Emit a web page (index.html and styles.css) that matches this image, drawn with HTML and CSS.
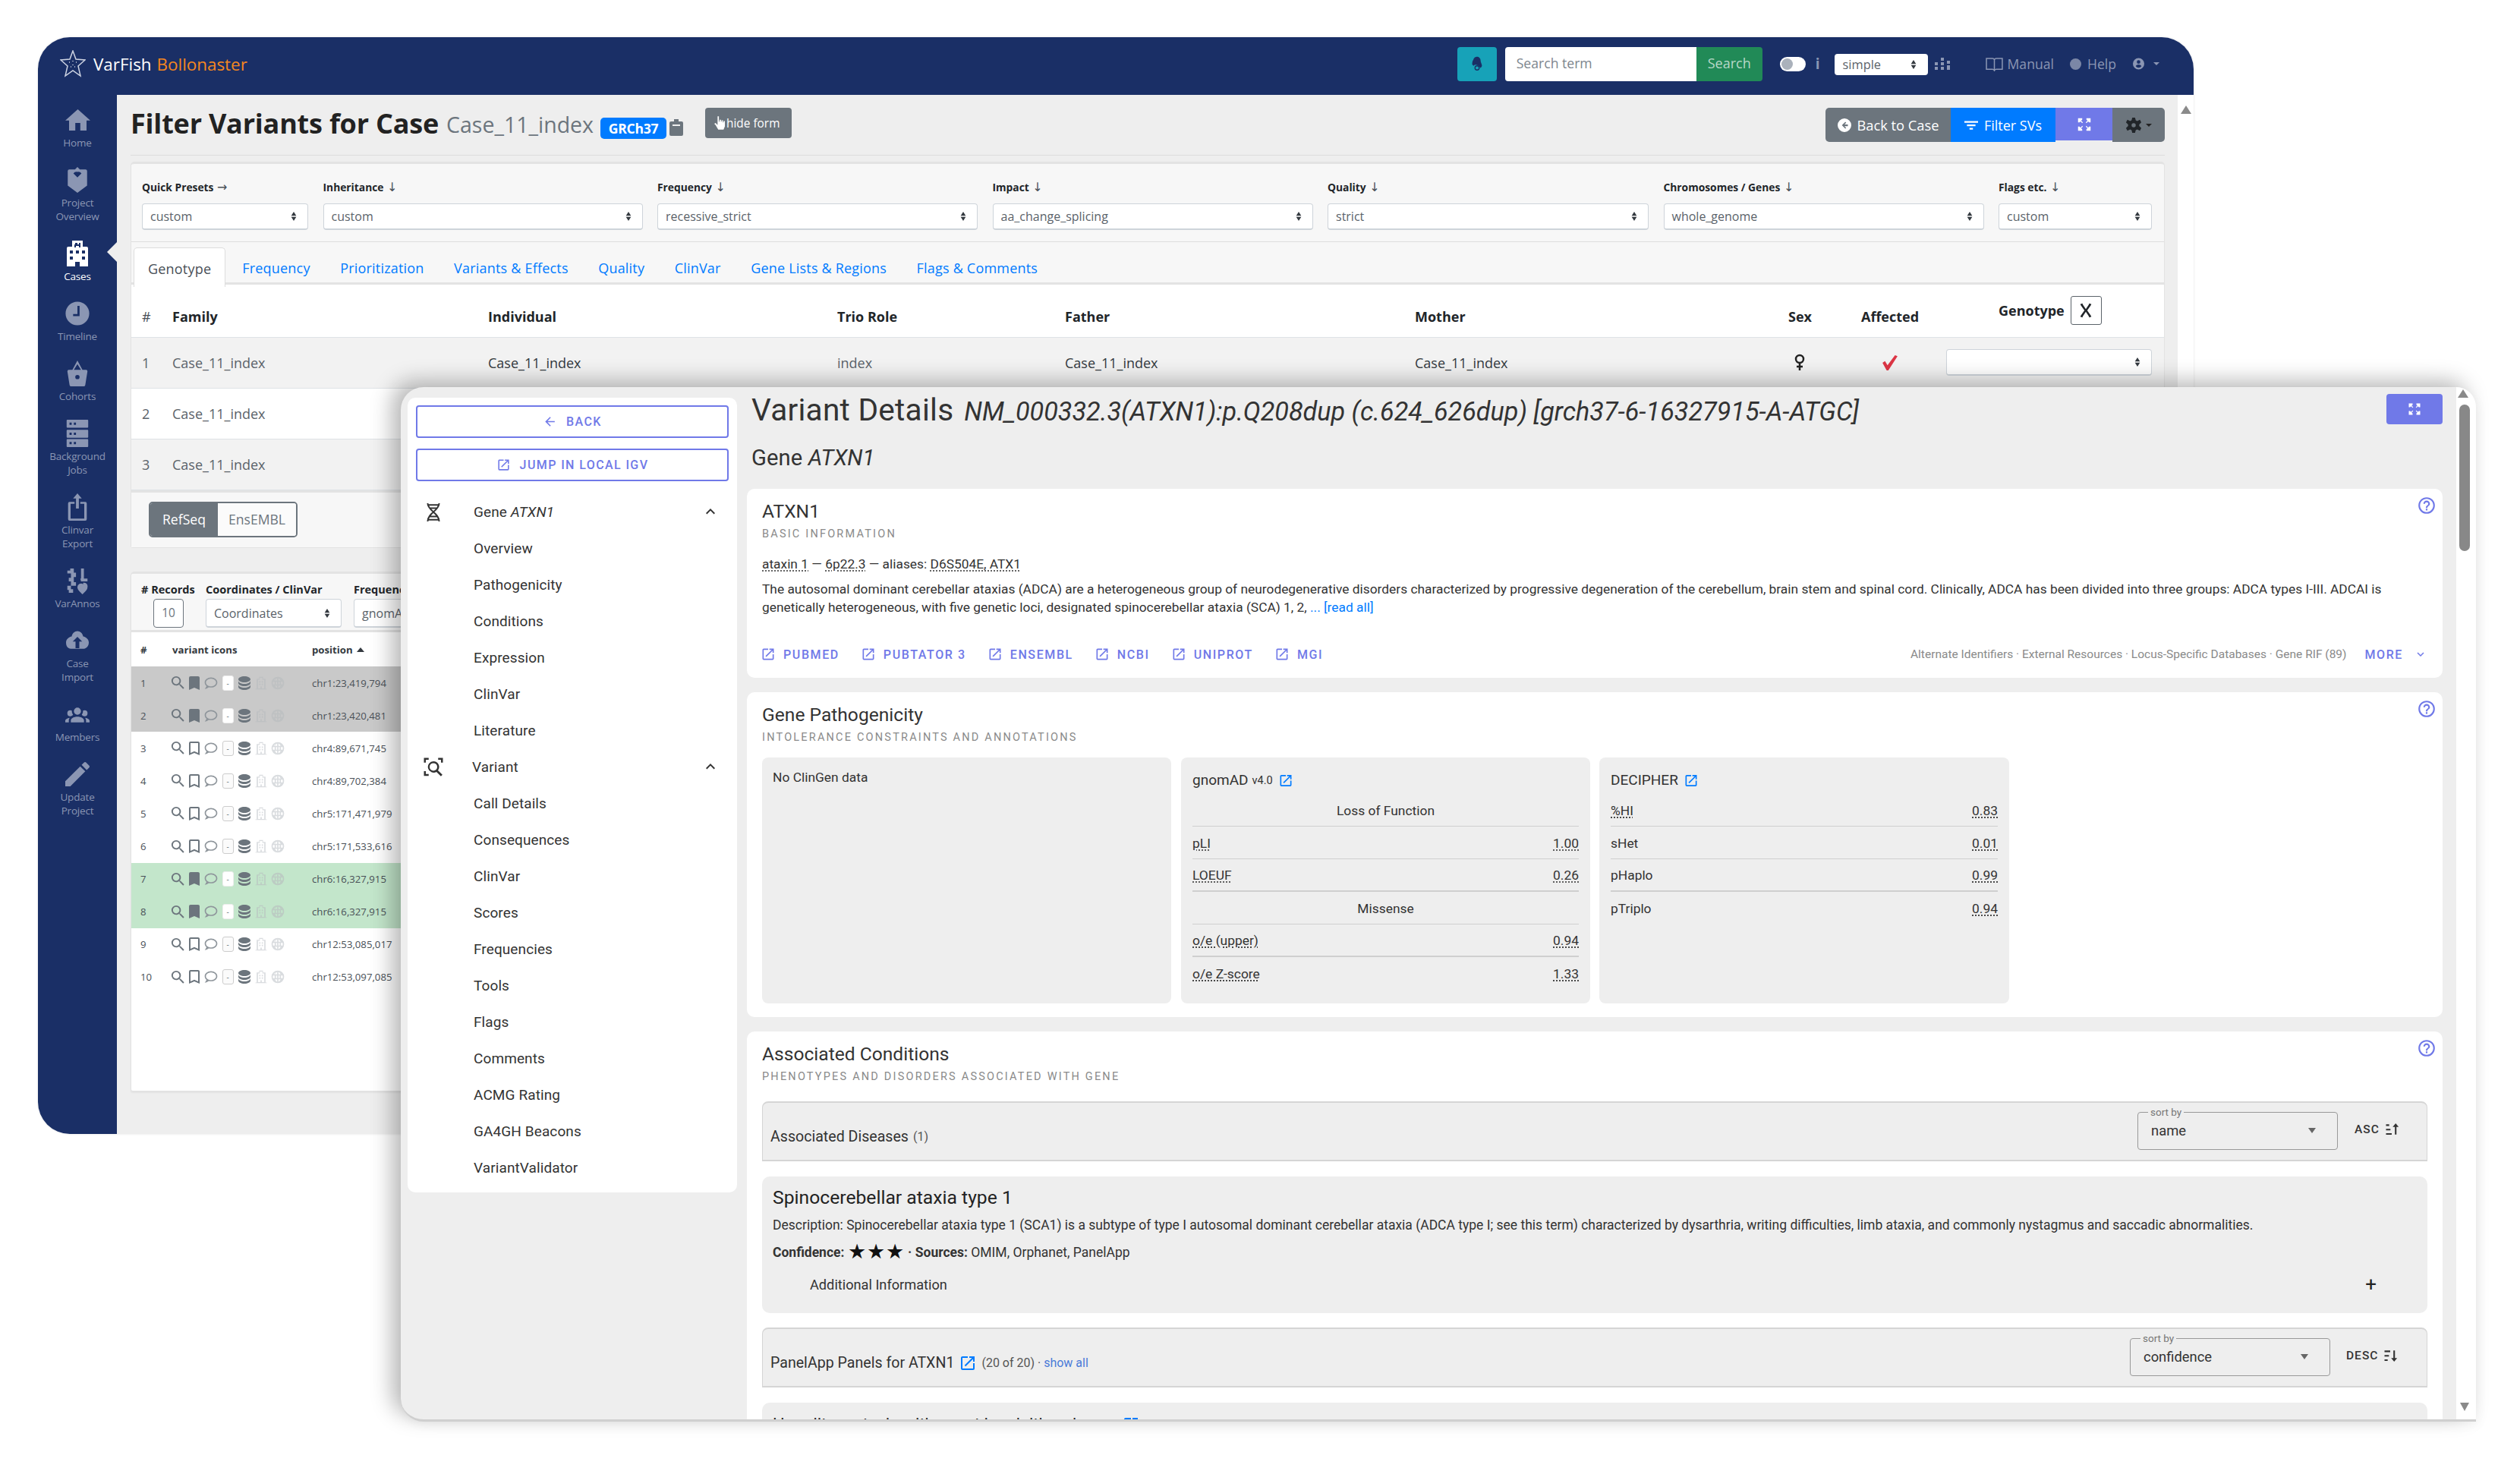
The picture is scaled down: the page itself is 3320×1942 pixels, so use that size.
FILE: index.html
```html
<!DOCTYPE html>
<html lang="en">
<head>
<meta charset="utf-8">
<title>VarFish Bollonaster</title>
<link rel="stylesheet" href="styles.css">
</head>
<body>
<svg class="defs" aria-hidden="true">
  <defs>
    <symbol id="i-ext" viewBox="0 0 24 24"><path d="M14,3V5H17.59L7.76,14.83L9.17,16.24L19,6.41V10H21V3M19,19H5V5H12V3H5C3.89,3 3,3.9 3,5V19A2,2 0 0,0 5,21H19A2,2 0 0,0 21,19V12H19V19Z"/></symbol>
    <symbol id="i-up" viewBox="0 0 24 24"><path d="M7.41,15.41L12,10.83L16.59,15.41L18,14L12,8L6,14L7.41,15.41Z"/></symbol>
    <symbol id="i-down" viewBox="0 0 24 24"><path d="M7.41,8.58L12,13.17L16.59,8.58L18,10L12,16L6,10L7.41,8.58Z"/></symbol>
    <symbol id="i-left" viewBox="0 0 24 24"><path d="M20,11V13H8L13.5,18.5L12.08,19.92L4.16,12L12.08,4.08L13.5,5.5L8,11H20Z"/></symbol>
    <symbol id="i-help" viewBox="0 0 24 24"><path d="M11,18H13V16H11V18M12,2A10,10 0 0,0 2,12A10,10 0 0,0 12,22A10,10 0 0,0 22,12A10,10 0 0,0 12,2M12,20C7.59,20 4,16.41 4,12C4,7.59 7.59,4 12,4C16.41,4 20,7.59 20,12C20,16.41 16.41,20 12,20M12,6A4,4 0 0,0 8,10H10A2,2 0 0,1 12,8A2,2 0 0,1 14,10C14,12 11,11.75 11,15H13C13,12.75 16,12.5 16,10A4,4 0 0,0 12,6Z"/></symbol>
    <symbol id="i-mag" viewBox="0 0 24 24"><path d="M9.5,3A6.5,6.5 0 0,1 16,9.5C16,11.11 15.41,12.59 14.44,13.73L14.71,14H15.5L20.5,19L19,20.5L14,15.5V14.71L13.73,14.44C12.59,15.41 11.11,16 9.5,16A6.5,6.5 0 0,1 3,9.5A6.5,6.5 0 0,1 9.5,3M9.5,5C7,5 5,7 5,9.5C5,12 7,14 9.5,14C12,14 14,12 14,9.5C14,7 12,5 9.5,5Z"/></symbol>
    <symbol id="i-bm" viewBox="0 0 24 24"><path d="M17,3H7A2,2 0 0,0 5,5V21L12,18L19,21V5C19,3.89 18.1,3 17,3Z"/></symbol>
    <symbol id="i-bmo" viewBox="0 0 24 24"><path d="M17,18L12,15.82L7,18V5H17M17,3H7A2,2 0 0,0 5,5V21L12,18L19,21V5C19,3.89 18.1,3 17,3Z"/></symbol>
    <symbol id="i-cmt" viewBox="0 0 24 24"><path d="M12,3C6.5,3 2,6.58 2,11C2.05,13.15 3.06,15.17 4.75,16.5C4.75,17.1 4.33,18.67 2,21C4.37,20.89 6.64,20 8.47,18.5C9.61,18.83 10.81,19 12,19C17.5,19 22,15.42 22,11C22,6.58 17.5,3 12,3M12,17C7.58,17 4,14.31 4,11C4,7.69 7.58,5 12,5C16.42,5 20,7.69 20,11C20,14.31 16.42,17 12,17Z"/></symbol>
    <symbol id="i-db" viewBox="0 0 24 24"><path d="M12,3C7.58,3 4,4.79 4,7C4,9.21 7.58,11 12,11C16.42,11 20,9.21 20,7C20,4.79 16.42,3 12,3M4,9V12C4,14.21 7.58,16 12,16C16.42,16 20,14.21 20,12V9C20,11.21 16.42,13 12,13C7.58,13 4,11.21 4,9M4,14V17C4,19.21 7.58,21 12,21C16.42,21 20,19.21 20,17V14C20,16.21 16.42,18 12,18C7.58,18 4,16.21 4,14Z"/></symbol>
    <symbol id="i-bld" viewBox="0 0 24 24"><path d="M9 2h6v3h4v17H5V5h4V2zm1 1.500v3H7v14h4v-3h2v3h4v-14h-3v-3h-4zM9 9h2v2H9V9zm4 0h2v2h-2V9zM9 13h2v2H9v-2zm4 0h2v2h-2v-2zM3 21h18v1H3v-1z"/></symbol>
    <symbol id="i-globe" viewBox="0 0 24 24"><path d="M12 2a10 10 0 1 0 0 20 10 10 0 0 0 0-20zm-1 2.100V8H7.600C8.300 6 9.500 4.600 11 4.100zm2 0c1.500.5 2.700 1.900 3.400 3.900H13V4.100zM5.600 8H5.500c1-1.500 2.300-2.700 3.900-3.300C8 5.900 6.900 7 6.500 8h-.9zM4.300 10H7.100c-.1.700-.1 1.300-.1 2s0 1.300.1 2H4.300a8 8 0 0 1 0-4zm4.800 0H11v4H9.100c-.1-.7-.1-1.300-.1-2s0-1.300.1-2zm3.900 0h1.900c.1.700.1 1.300.1 2s0 1.300-.1 2H13v-4zm3.900 0h2.800a8 8 0 0 1 0 4h-2.800c.1-.7.1-1.300.1-2s0-1.300-.1-2zM7.600 16H11v3.900C9.500 19.400 8.300 18 7.600 16zm5.400 0h3.400c-.7 2-1.900 3.400-3.400 3.900V16z"/></symbol>
    <symbol id="i-home" viewBox="2 3 20 17"><path d="M10,20V14H14V20H19V12H22L12,3L2,12H5V20H10Z"/></symbol>
    <symbol id="i-cube" viewBox="0 0 24 32"><path d="M12 0l3 3h7a2 2 0 0 1 2 2v18l-12 9L0 23V5a2 2 0 0 1 2-2h7l3-3zm0 6a5 5 0 0 0-5 2l5 5 5-5a5 5 0 0 0-5-2z"/></symbol>
    <symbol id="i-hosp" viewBox="0 0 32 34"><path d="M9 0h14v8h5a2 2 0 0 1 2 2v24H19v-6h-6v6H2V10a2 2 0 0 1 2-2h5V0zm4 3v2h-1v4h2V7h4v2h2V3h-2v2h-2V3h-3zM6 13v4h4v-4H6zm8 0v4h4v-4h-4zm8 0v4h4v-4h-4zM6 21v4h4v-4H6zm16 0v4h4v-4h-4z" fill-rule="evenodd"/></symbol>
    <symbol id="i-clock" viewBox="0 0 24 24"><path fill-rule="evenodd" d="M12 1a11 11 0 1 1 0 22 11 11 0 0 1 0-22zM12 5v7.500H8v2h6V5h-2z"/></symbol>
    <symbol id="i-bag" viewBox="0 0 28 36"><path fill-rule="evenodd" d="M14 0l7 13h5a2 2 0 0 1 2 2l-3 19a2 2 0 0 1-2 2H5a2 2 0 0 1-2-2L0 15a2 2 0 0 1 2-2h5L14 0zm0 5L9 13h10L14 5zm0 15a3 3 0 1 0 0 6 3 3 0 0 0 0-6z"/></symbol>
    <symbol id="i-srv" viewBox="0 0 30 38"><path fill-rule="evenodd" d="M1 0h28a1 1 0 0 1 1 1v9a1 1 0 0 1-1 1H1a1 1 0 0 1-1-1V1a1 1 0 0 1 1-1zm3 4v3h3V4H4zm6 0v3h3V4h-3zM1 14h28a1 1 0 0 1 1 1v9a1 1 0 0 1-1 1H1a1 1 0 0 1-1-1v-9a1 1 0 0 1 1-1zm3 4v3h3v-3H4zm6 0v3h3v-3h-3zM1 27h28a1 1 0 0 1 1 1v9a1 1 0 0 1-1 1H1a1 1 0 0 1-1-1v-9a1 1 0 0 1 1-1zm3 4v3h3v-3H4zm6 0v3h3v-3h-3z"/></symbol>
    <symbol id="i-exp" viewBox="0 0 28 38"><path fill-rule="evenodd" d="M14 0l6 7h-4v14h-4V7H8l6-7zM3 12h7v2.500H4.500v20.500h19V14.500H18V12h7a2 2 0 0 1 2 2v22a2 2 0 0 1-2 2H3a2 2 0 0 1-2-2V14a2 2 0 0 1 2-2z"/></symbol>
    <symbol id="i-ann" viewBox="0 0 32 38"><path d="M6 2h5v6h3V14h-3v7h3v5H7v-6H4v-5h3V9H2V5h4V2zm14 0h5v14h5v4h-9l-1-4h1V2zm4 20a5 5 0 0 1 6 6c0 4-4 7-7 10-3-3-7-6-7-10a5 5 0 0 1 8-4zM2 26h5v5h3v5H4v-4H2v-6z"/></symbol>
    <symbol id="i-cloud" viewBox="0 0 24 24"><path fill-rule="evenodd" d="M14,13V20H10V13H7L12,8L17,13M12,2C15,2 17.500,4.500 18,7.500C21,8 24,10.500 24,14C24,18 21,20.500 19,20.500H5C2,20.500 0,18 0,14C0,10.500 3,8 6,7.500C6.500,4.500 9,2 12,2Z"/></symbol>
    <symbol id="i-grp" viewBox="0 0 24 24"><path d="M12,5.500A3.500,3.500 0 0,1 15.500,9A3.500,3.500 0 0,1 12,12.500A3.500,3.500 0 0,1 8.500,9A3.500,3.500 0 0,1 12,5.500M5,8C5.560,8 6.080,8.150 6.530,8.420C6.380,9.850 6.800,11.270 7.660,12.380C7.160,13.340 6.160,14 5,14A3,3 0 0,1 2,11A3,3 0 0,1 5,8M19,8A3,3 0 0,1 22,11A3,3 0 0,1 19,14C17.840,14 16.840,13.340 16.340,12.380C17.200,11.270 17.620,9.850 17.470,8.420C17.920,8.150 18.440,8 19,8M5.500,18.250C5.500,16.180 8.410,14.500 12,14.500C15.590,14.500 18.500,16.180 18.500,18.250V20H5.500V18.250M0,20V18.500C0,17.110 1.890,15.940 4.450,15.600C3.860,16.280 3.500,17.220 3.500,18.250V20H0M24,20H20.500V18.250C20.500,17.220 20.140,16.280 19.550,15.600C22.110,15.940 24,17.110 24,18.500V20Z"/></symbol>
    <symbol id="i-pen" viewBox="3 3 18 18"><path d="M20.710,7.040C21.100,6.650 21.100,6 20.710,5.630L18.370,3.290C18,2.900 17.350,2.900 16.960,3.290L15.120,5.120L18.870,8.870M3,17.250V21H6.750L17.810,9.930L14.060,6.180L3,17.250Z"/></symbol>
    <symbol id="i-dna" viewBox="0 0 24 24"><path fill="none" stroke="currentColor" stroke-width="1.800" d="M5 1c0 9 14 12 14 22M19 1c0 9-14 12-14 22M5 3h14M7 7h10M7 17h10M5 21h14"/></symbol>
    <symbol id="i-target" viewBox="0 0 24 24"><path d="M2 2h5v2H4v3H2V2zm15 0h5v5h-2V4h-3V2zM2 16h2v3h3v2H2v-5z"/><path d="M12 5.500a6 6 0 0 1 4.800 9.600l4.700 4.700-1.600 1.600-4.700-4.700A6 6 0 1 1 12 5.500zm0 2a4 4 0 1 0 0 8 4 4 0 0 0 0-8z" fill-rule="evenodd"/></symbol>
    <symbol id="i-expand" viewBox="0 0 24 24"><path d="M3 3h6v2l-1.500 1.500L10 9l-1 1-2.500-2.500L5 9H3V3zm18 0v6h-2l-1.500-1.500L15 10l-1-1 2.500-2.500L15 5V3h6zM3 21v-6h2l1.500 1.500L9 14l1 1-2.500 2.500L9 19v2H3zm18 0h-6v-2l1.500-1.500L14 15l1-1 2.500 2.500L19 15h2v6z"/></symbol>
    <symbol id="i-sort" viewBox="0 0 24 24"><path d="M3 4h9v2.500H3V4zm0 7h7v2.500H3V11zm0 7h5v2.500H3V18zM17 4h2.500v12H23l-4.750 5.500L13.500 16H17V4z"/></symbol>
    <symbol id="i-sortu" viewBox="0 0 24 24"><path d="M3 4h5v2.500H3V4zm0 7h7v2.500H3V11zm0 7h9v2.500H3V18zM17 20h2.500V8H23l-4.750-5.500L13.500 8H17v12z"/></symbol>
    <symbol id="i-caret" viewBox="0 0 12 24"><path d="M6 3l5 8H1l5-8zm0 18l-5-8h10l-5 8z"/></symbol>
  </defs>
</svg>

<section class="win-back">
  <header class="topbar">
    <div class="brand">
      <svg class="logo" viewBox="0 0 34 36"><path fill="none" stroke="#cdd3e2" stroke-width="1.500" d="M17 1l4 11 12 1-9 8 3 13-10-7-10 7 3-13-9-8 12-1zM12 16h1M21 16h1M17 14v1M14 22h1M19 22h1M17 19v1"/></svg>
      <span class="brand-name">VarFish</span>
      <span class="brand-sub">Bollonaster</span>
    </div>
    <div class="top-tools">
      <button class="teal-btn" type="button"><svg class="ic-18" viewBox="0 0 24 24"><path fill="#1a2f66" d="M12 2a5 5 0 0 1 5 5c0 3 2 5 2 8a6 6 0 0 1-2 3l-3-3a6 6 0 0 0-2-1 4 4 0 0 0-5 1l-2-2c0-6 2-6 2-8a5 5 0 0 1 5-3z"/><circle cx="12" cy="18" r="3" fill="none" stroke="#1a2f66" stroke-width="1.500"/></svg></button>
      <div class="search"><span class="search-input">Search term</span><span class="search-btn">Search</span></div>
      <span class="toggle"><span class="knob"></span></span>
      <span class="info-i">i</span>
      <span class="mini-select">simple<svg class="sel-caret" viewBox="0 0 12 24"><use href="#i-caret"/></svg></span>
      <svg class="ic-bars" viewBox="0 0 20 16"><path d="M8 0h4v4H8zM0 6h4v4H0zM8 6h4v4H8zM16 4h4v4h-4zM0 12h4v4H0zM8 12h4v4H8zM16 10h4v6h-4z"/></svg>
      <span class="top-link man"><svg class="ic-book" viewBox="0 0 24 20"><path fill="none" stroke="currentColor" stroke-width="1.600" d="M1 2h8a3 3 0 0 1 3 2 3 3 0 0 1 3-2h8v15h-8a3 3 0 0 0-3 2 3 3 0 0 0-3-2H1zM12 4v15"/></svg>Manual</span>
      <span class="top-link hlp"><span class="dot-help"></span>Help</span>
      <svg class="ic-user" viewBox="0 0 16 16"><path fill-rule="evenodd" d="M8 0a8 8 0 1 1 0 16A8 8 0 0 1 8 0zm0 3a2.500 2.500 0 1 0 0 5 2.500 2.500 0 0 0 0-5zm0 6c-2 0-4 1-4 2.500a5 5 0 0 0 8 0C12 10 10 9 8 9z"/></svg>
      <span class="tiny-caret"></span>
    </div>
  </header>

  <div class="back-body">
    <nav class="side">
      <a class="side-item"><span class="side-ic"><svg class="s-home"><use href="#i-home"/></svg></span><span>Home</span></a>
      <a class="side-item"><span class="side-ic"><svg class="s-cube"><use href="#i-cube"/></svg></span><span>Project<br>Overview</span></a>
      <a class="side-item is-active"><span class="side-ic"><svg class="s-hosp"><use href="#i-hosp"/></svg></span><span>Cases</span><i class="side-arrow"></i></a>
      <a class="side-item"><span class="side-ic"><svg class="s-clock"><use href="#i-clock"/></svg></span><span>Timeline</span></a>
      <a class="side-item"><span class="side-ic"><svg class="s-bag"><use href="#i-bag"/></svg></span><span>Cohorts</span></a>
      <a class="side-item"><span class="side-ic"><svg class="s-srv"><use href="#i-srv"/></svg></span><span>Background<br>Jobs</span></a>
      <a class="side-item"><span class="side-ic"><svg class="s-exp"><use href="#i-exp"/></svg></span><span>Clinvar<br>Export</span></a>
      <a class="side-item"><span class="side-ic"><svg class="s-ann"><use href="#i-ann"/></svg></span><span>VarAnnos</span></a>
      <a class="side-item"><span class="side-ic"><svg class="s-cloud"><use href="#i-cloud"/></svg></span><span>Case<br>Import</span></a>
      <a class="side-item"><span class="side-ic"><svg class="s-grp"><use href="#i-grp"/></svg></span><span>Members</span></a>
      <a class="side-item"><span class="side-ic"><svg class="s-pen"><use href="#i-pen"/></svg></span><span>Update<br>Project</span></a>
    </nav>

    <main class="back-main">
      <div class="title-row">
        <h1 class="page-title">Filter Variants for Case</h1>
        <span class="title-case">Case_11_index</span>
        <span class="badge-genome">GRCh37</span>
        <svg class="ic-clip" viewBox="0 0 18 22"><path d="M6 0h6v3h4a2 2 0 0 1 2 2v15a2 2 0 0 1-2 2H2a2 2 0 0 1-2-2V5a2 2 0 0 1 2-2h4V0zM4 7v2h10V7H4z" fill-rule="evenodd"/></svg>
        <button class="hide-form" type="button"><svg class="ic-hand" viewBox="0 0 16 20"><path fill="#fff" d="M5 0h2v8h1V5h2v3h1V6h2v3h1V7h2v8l-2 5H6l-4-7-2-2 2-1 3 3V0z"/></svg>hide form</button>
        <div class="btn-group">
          <span class="gb gb-grey"><svg class="ic-back" viewBox="0 0 16 16"><path fill-rule="evenodd" d="M8 0a8 8 0 1 1 0 16A8 8 0 0 1 8 0zm1 4L5 8l4 4 1-1-2-2h4V7H8l2-2-1-1z"/></svg>Back to Case</span>
          <span class="gb gb-blue"><svg class="ic-filter" viewBox="0 0 16 16"><path d="M0 3h16v2H0zM3 7h10v2H3zM6 11h4v2H6z"/></svg>Filter SVs</span>
          <span class="gb gb-purple"><svg class="ic-expand"><use href="#i-expand"/></svg></span>
          <span class="gb gb-gear"><svg class="ic-gear" viewBox="0 0 24 24"><path fill-rule="evenodd" d="M10 1h4l1 4 2 1 4-2 2 4-3 3v2l3 3-2 4-4-2-2 1-1 4h-4l-1-4-2-1-4 2-2-4 3-3v-2L1 8l2-4 4 2 2-1 1-4zm2 8a3 3 0 1 0 0 6 3 3 0 0 0 0-6z"/></svg><i class="tiny-caret dark"></i></span>
        </div>
      </div>

      <section class="q-card">
        <div class="presets">
          <div class="preset"><label class="lbl">Quick Presets <span class="arr">→</span></label><span class="sel">custom<svg class="sel-caret" viewBox="0 0 12 24"><use href="#i-caret"/></svg></span></div>
          <div class="preset"><label class="lbl">Inheritance <span class="arr">↓</span></label><span class="sel">custom<svg class="sel-caret" viewBox="0 0 12 24"><use href="#i-caret"/></svg></span></div>
          <div class="preset"><label class="lbl">Frequency <span class="arr">↓</span></label><span class="sel">recessive_strict<svg class="sel-caret" viewBox="0 0 12 24"><use href="#i-caret"/></svg></span></div>
          <div class="preset"><label class="lbl">Impact <span class="arr">↓</span></label><span class="sel">aa_change_splicing<svg class="sel-caret" viewBox="0 0 12 24"><use href="#i-caret"/></svg></span></div>
          <div class="preset"><label class="lbl">Quality <span class="arr">↓</span></label><span class="sel">strict<svg class="sel-caret" viewBox="0 0 12 24"><use href="#i-caret"/></svg></span></div>
          <div class="preset"><label class="lbl">Chromosomes / Genes <span class="arr">↓</span></label><span class="sel">whole_genome<svg class="sel-caret" viewBox="0 0 12 24"><use href="#i-caret"/></svg></span></div>
          <div class="preset"><label class="lbl">Flags etc. <span class="arr">↓</span></label><span class="sel">custom<svg class="sel-caret" viewBox="0 0 12 24"><use href="#i-caret"/></svg></span></div>
        </div>
        <div class="tabs">
          <a class="tab is-on">Genotype</a><a class="tab">Frequency</a><a class="tab">Prioritization</a><a class="tab">Variants &amp; Effects</a><a class="tab">Quality</a><a class="tab">ClinVar</a><a class="tab">Gene Lists &amp; Regions</a><a class="tab">Flags &amp; Comments</a>
        </div>
        <div class="ped">
          <div class="ped-head">
            <span class="muted-h">#</span><b>Family</b><b>Individual</b><b>Trio Role</b><b>Father</b><b>Mother</b><b>Sex</b><b>Affected</b>
            <span class="geno-h"><b>Genotype</b><span class="x-btn"><svg viewBox="0 0 24 24"><path d="M4 3l3-1 1 2 4 6 4-6 1-2 3 1-1 2-5 7 5 7 1 2-3 1-1-2-4-6-4 6-1 2-3-1 1-2 5-7-5-7z"/></svg></span></span>
          </div>
          <div class="ped-row grey">
            <span>1</span><span>Case_11_index</span><span class="dark">Case_11_index</span><span>index</span><span class="dark">Case_11_index</span><span class="dark">Case_11_index</span>
            <span><svg class="ic-fem" viewBox="0 0 14 24"><path fill="none" stroke="#222" stroke-width="2.500" d="M7 2a5 5 0 1 1 0 10A5 5 0 0 1 7 2zM7 12v10M3 17h8"/></svg></span>
            <span><svg class="ic-chk" viewBox="0 0 20 20"><path fill="#dc3545" d="M1 10l3-2 3 5L16 1l3 1L8 19h-2z"/></svg></span>
            <span class="sel geno-sel"><svg class="sel-caret" viewBox="0 0 12 24"><use href="#i-caret"/></svg></span>
          </div>
          <div class="ped-row"><span>2</span><span>Case_11_index</span></div>
          <div class="ped-row grey"><span>3</span><span>Case_11_index</span></div>
        </div>
        <div class="ref-foot">
          <div class="refgroup"><span class="ref-on">RefSeq</span><span class="ref-off">EnsEMBL</span></div>
        </div>
      </section>

      <section class="res-card">
        <div class="res-tools">
          <div class="rt-col rt-first"><label class="lbl">#&nbsp;Records</label><span class="num">10</span></div>
          <div class="rt-col rt-wide"><label class="lbl">Coordinates / ClinVar</label><span class="sel small">Coordinates<svg class="sel-caret" viewBox="0 0 12 24"><use href="#i-caret"/></svg></span></div>
          <div class="rt-col rt-wide"><label class="lbl">Frequency</label><span class="sel small">gnomAD</span></div>
        </div>
        <div class="res-head"><b>#</b><b>variant icons</b><b>position <span class="arrow-up"></span></b></div>
        <div class="res-row gr"><span>1</span><span class="vi"><svg class="vs"><use href="#i-mag"/></svg><svg class="vb"><use href="#i-bm"/></svg><svg class="vc"><use href="#i-cmt"/></svg><i class="vm wh">-</i><svg class="vd"><use href="#i-db"/></svg><svg class="vf"><use href="#i-bld"/></svg><svg class="vf"><use href="#i-globe"/></svg></span><span>chr1:23,419,794</span></div>
        <div class="res-row gr"><span>2</span><span class="vi"><svg class="vs"><use href="#i-mag"/></svg><svg class="vb"><use href="#i-bm"/></svg><svg class="vc"><use href="#i-cmt"/></svg><i class="vm wh">-</i><svg class="vd"><use href="#i-db"/></svg><svg class="vf"><use href="#i-bld"/></svg><svg class="vf"><use href="#i-globe"/></svg></span><span>chr1:23,420,481</span></div>
        <div class="res-row"><span>3</span><span class="vi"><svg class="vs"><use href="#i-mag"/></svg><svg class="vb"><use href="#i-bmo"/></svg><svg class="vc"><use href="#i-cmt"/></svg><i class="vm">-</i><svg class="vd"><use href="#i-db"/></svg><svg class="vf"><use href="#i-bld"/></svg><svg class="vf"><use href="#i-globe"/></svg></span><span>chr4:89,671,745</span></div>
        <div class="res-row"><span>4</span><span class="vi"><svg class="vs"><use href="#i-mag"/></svg><svg class="vb"><use href="#i-bmo"/></svg><svg class="vc"><use href="#i-cmt"/></svg><i class="vm">-</i><svg class="vd"><use href="#i-db"/></svg><svg class="vf"><use href="#i-bld"/></svg><svg class="vf"><use href="#i-globe"/></svg></span><span>chr4:89,702,384</span></div>
        <div class="res-row"><span>5</span><span class="vi"><svg class="vs"><use href="#i-mag"/></svg><svg class="vb"><use href="#i-bmo"/></svg><svg class="vc"><use href="#i-cmt"/></svg><i class="vm">-</i><svg class="vd"><use href="#i-db"/></svg><svg class="vf"><use href="#i-bld"/></svg><svg class="vf"><use href="#i-globe"/></svg></span><span>chr5:171,471,979</span></div>
        <div class="res-row"><span>6</span><span class="vi"><svg class="vs"><use href="#i-mag"/></svg><svg class="vb"><use href="#i-bmo"/></svg><svg class="vc"><use href="#i-cmt"/></svg><i class="vm">-</i><svg class="vd"><use href="#i-db"/></svg><svg class="vf"><use href="#i-bld"/></svg><svg class="vf"><use href="#i-globe"/></svg></span><span>chr5:171,533,616</span></div>
        <div class="res-row gn"><span>7</span><span class="vi"><svg class="vs"><use href="#i-mag"/></svg><svg class="vb"><use href="#i-bm"/></svg><svg class="vc"><use href="#i-cmt"/></svg><i class="vm wh">-</i><svg class="vd"><use href="#i-db"/></svg><svg class="vf"><use href="#i-bld"/></svg><svg class="vf"><use href="#i-globe"/></svg></span><span>chr6:16,327,915</span></div>
        <div class="res-row gn"><span>8</span><span class="vi"><svg class="vs"><use href="#i-mag"/></svg><svg class="vb"><use href="#i-bm"/></svg><svg class="vc"><use href="#i-cmt"/></svg><i class="vm wh">-</i><svg class="vd"><use href="#i-db"/></svg><svg class="vf"><use href="#i-bld"/></svg><svg class="vf"><use href="#i-globe"/></svg></span><span>chr6:16,327,915</span></div>
        <div class="res-row"><span>9</span><span class="vi"><svg class="vs"><use href="#i-mag"/></svg><svg class="vb"><use href="#i-bmo"/></svg><svg class="vc"><use href="#i-cmt"/></svg><i class="vm">-</i><svg class="vd"><use href="#i-db"/></svg><svg class="vf"><use href="#i-bld"/></svg><svg class="vf"><use href="#i-globe"/></svg></span><span>chr12:53,085,017</span></div>
        <div class="res-row"><span>10</span><span class="vi"><svg class="vs"><use href="#i-mag"/></svg><svg class="vb"><use href="#i-bmo"/></svg><svg class="vc"><use href="#i-cmt"/></svg><i class="vm">-</i><svg class="vd"><use href="#i-db"/></svg><svg class="vf"><use href="#i-bld"/></svg><svg class="vf"><use href="#i-globe"/></svg></span><span>chr12:53,097,085</span></div>
      </section>
    </main>

    <div class="back-scroll"><span class="sc-up"></span></div>
  </div>
</section>

<section class="win-front">
  <aside class="fnav">
    <button class="btn-out" type="button"><svg class="bi"><use href="#i-left"/></svg>Back</button>
    <button class="btn-out" type="button"><svg class="bi"><use href="#i-ext"/></svg>Jump in Local IGV</button>
    <div class="fn-list">
      <div class="fn-item fn-head"><svg class="fn-ic"><use href="#i-dna"/></svg><span>Gene <em>ATXN1</em></span><svg class="fn-chev"><use href="#i-up"/></svg></div>
      <div class="fn-item">Overview</div>
      <div class="fn-item">Pathogenicity</div>
      <div class="fn-item">Conditions</div>
      <div class="fn-item">Expression</div>
      <div class="fn-item">ClinVar</div>
      <div class="fn-item">Literature</div>
      <div class="fn-item fn-head"><svg class="fn-ic fn-ic-t"><use href="#i-target"/></svg><span>Variant</span><svg class="fn-chev"><use href="#i-up"/></svg></div>
      <div class="fn-item">Call Details</div>
      <div class="fn-item">Consequences</div>
      <div class="fn-item">ClinVar</div>
      <div class="fn-item">Scores</div>
      <div class="fn-item">Frequencies</div>
      <div class="fn-item">Tools</div>
      <div class="fn-item">Flags</div>
      <div class="fn-item">Comments</div>
      <div class="fn-item">ACMG Rating</div>
      <div class="fn-item">GA4GH Beacons</div>
      <div class="fn-item">VariantValidator</div>
    </div>
  </aside>

  <div class="fmain">
    <div class="vd-head">
      <div class="vd-title"><h2>Variant Details</h2><em>NM_000332.3(ATXN1):p.Q208dup (c.624_626dup) [grch37-6-16327915-A-ATGC]</em></div>
      <span class="vd-btn"><svg><use href="#i-expand"/></svg></span>
    </div>
    <div class="vd-gene">Gene <em>ATXN1</em></div>

    <section class="fcard fc1">
      <svg class="hq"><use href="#i-help"/></svg>
      <div class="fc-title">ATXN1</div>
      <div class="fc-sub">Basic Information</div>
      <div class="gene-line"><u>ataxin 1</u> — <u>6p22.3</u> — aliases: <u>D6S504E, ATX1</u></div>
      <p class="gene-desc">The autosomal dominant cerebellar ataxias (ADCA) are a heterogeneous group of neurodegenerative disorders characterized by progressive degeneration of the cerebellum, brain stem and spinal cord. Clinically, ADCA has been divided into three groups: ADCA types I-III. ADCAI is<br>genetically heterogeneous, with five genetic loci, designated spinocerebellar ataxia (SCA) 1, 2, <a>... [read all]</a></p>
      <div class="ext-row">
        <a class="xl"><svg><use href="#i-ext"/></svg>PubMed</a>
        <a class="xl"><svg><use href="#i-ext"/></svg>PubTator 3</a>
        <a class="xl"><svg><use href="#i-ext"/></svg>Ensembl</a>
        <a class="xl"><svg><use href="#i-ext"/></svg>NCBI</a>
        <a class="xl"><svg><use href="#i-ext"/></svg>UniProt</a>
        <a class="xl"><svg><use href="#i-ext"/></svg>MGI</a>
        <span class="more-info">Alternate Identifiers · External Resources · Locus-Specific Databases · Gene RIF (89)</span>
        <a class="more">More<svg><use href="#i-down"/></svg></a>
      </div>
    </section>

    <section class="fcard fc2">
      <svg class="hq"><use href="#i-help"/></svg>
      <div class="fc-title">Gene Pathogenicity</div>
      <div class="fc-sub">Intolerance Constraints and Annotations</div>
      <div class="panels">
        <div class="pan"><span class="pan-plain">No ClinGen data</span></div>
        <div class="pan">
          <div class="pan-title">gnomAD <small>v4.0</small> <svg class="pan-ext"><use href="#i-ext"/></svg></div>
          <div class="pr center line">Loss of Function</div>
          <div class="pr line"><u>pLI</u><u>1.00</u></div>
          <div class="pr line thick"><u>LOEUF</u><u>0.26</u></div>
          <div class="pr center line">Missense</div>
          <div class="pr line thick"><u>o/e (upper)</u><u>0.94</u></div>
          <div class="pr"><u>o/e Z-score</u><u>1.33</u></div>
        </div>
        <div class="pan">
          <div class="pan-title">DECIPHER <svg class="pan-ext"><use href="#i-ext"/></svg></div>
          <div class="pr line"><u>%HI</u><u>0.83</u></div>
          <div class="pr line"><span>sHet</span><u>0.01</u></div>
          <div class="pr line thick"><span>pHaplo</span><u>0.99</u></div>
          <div class="pr"><span>pTriplo</span><u>0.94</u></div>
        </div>
      </div>
    </section>

    <section class="fcard fc3">
      <svg class="hq"><use href="#i-help"/></svg>
      <div class="fc-title">Associated Conditions</div>
      <div class="fc-sub">Phenotypes and Disorders Associated with Gene</div>
      <div class="bar-box bb1">
        <span class="bar-label">Associated Diseases <small>(1)</small></span>
        <fieldset class="sort-by"><legend>sort by</legend><span>name</span><i class="tri"></i></fieldset>
        <span class="sort-dir">ASC<svg><use href="#i-sortu"/></svg></span>
      </div>
      <div class="dis-box">
        <div class="dis-title">Spinocerebellar ataxia type 1</div>
        <div class="dis-line">Description: Spinocerebellar ataxia type 1 (SCA1) is a subtype of type I autosomal dominant cerebellar ataxia (ADCA type I; see this term) characterized by dysarthria, writing difficulties, limb ataxia, and commonly nystagmus and saccadic abnormalities.</div>
        <div class="dis-line conf"><b>Confidence:</b> <span class="stars">★★★</span> <b>· Sources:</b> OMIM, Orphanet, PanelApp</div>
        <div class="dis-more"><span>Additional Information</span><span class="plus">+</span></div>
      </div>
      <div class="bar-box bb2">
        <span class="bar-label">PanelApp Panels for ATXN1 <svg class="bar-ext"><use href="#i-ext"/></svg> <small>(20 of 20) · <a>show all</a></small></span>
        <fieldset class="sort-by"><legend>sort by</legend><span>confidence</span><i class="tri"></i></fieldset>
        <span class="sort-dir">DESC<svg><use href="#i-sort"/></svg></span>
      </div>
      <div class="dis-box dis-last"><div class="dis-sub">Hereditary ataxia with onset in adulthood <small>(v 1.95)</small> <svg class="bar-ext"><use href="#i-ext"/></svg></div></div>
    </section>
  </div>

  <div class="f-scroll"><span class="sc-up"></span><span class="thumb"></span><span class="sc-down"></span></div>
</section>
</body>
</html>
```

FILE: styles.css
```css
* { box-sizing: border-box; }
html, body { margin: 0; padding: 0; }
body { width: 3320px; height: 1942px; background: #fff; font-family: "Open Sans", "Liberation Sans", sans-serif; color: #495057; position: relative; overflow: hidden; }
.defs { width: 0; height: 0; position: absolute; }
svg { display: block; fill: currentColor; }
h1, h2, p { margin: 0; }
button { font: inherit; border: 0; }

/* back window */
.win-back { position: absolute; left: 50px; top: 49px; width: 2840px; height: 1445px; border-radius: 42px 42px 0 42px; overflow: hidden; box-shadow: 0 0 3px rgba(0,0,0,.12); display: flex; flex-direction: column; background: #fff; }
.topbar { height: 76px; background: #1a2f66; display: flex; align-items: flex-start; flex: none; }
.brand { display: flex; align-items: center; height: 70px; padding-left: 29px; font-size: 22.400px; }
.logo { width: 34px; height: 36px; margin-right: 10px; }
.brand-name { color: #fff; margin-right: 7px; }
.brand-sub { color: #f5871f; }
.top-tools { margin-left: auto; display: flex; align-items: center; height: 64px; padding-top: 6px; padding-right: 45px; color: #8b96b3; }
.teal-btn { width: 52px; height: 45px; background: #17a2b8; border-radius: 4px; display: flex; align-items: center; justify-content: center; margin-right: 11px; }
.ic-18 { width: 22px; height: 26px; }
.search { display: flex; height: 45px; margin-right: 23px; }
.search-input { width: 252px; background: #fff; border-radius: 4px 0 0 4px; color: #7d868e; font-size: 17.600px; line-height: 42px; padding-left: 15px; }
.search-btn { width: 87px; background: #218a57; color: #b8d8c9; font-size: 18px; line-height: 42px; text-align: center; border-radius: 0 4px 4px 0; }
.toggle { width: 34px; height: 19px; background: #fff; border-radius: 10px; position: relative; margin-right: 13px; }
.knob { position: absolute; left: 2px; top: 2px; width: 15px; height: 15px; background: #aab1bb; border-radius: 50%; }
.info-i { font-size: 19px; font-weight: 700; color: #8b96b3; margin-right: 19px; }
.mini-select { width: 123px; height: 28px; margin-top: 2px; background: #fff; border-radius: 4px; color: #5b636a; font-size: 16.400px; line-height: 30px; padding-left: 11px; display: flex; justify-content: space-between; align-items: center; padding-right: 15px; margin-right: 9px; }
.sel-caret { width: 8px; height: 16px; fill: #343a40; flex: none; }
.ic-bars { width: 20px; height: 16px; margin-right: 47px; }
.top-link { display: flex; align-items: center; font-size: 17.600px; }
.ic-book { width: 23px; height: 19px; margin-right: 6px; }
.man { margin-right: 21px; }
.hlp { margin-right: 22px; }
.dot-help { width: 15px; height: 15px; background: #7b87a6; border-radius: 50%; margin-right: 8px; }
.ic-user { width: 15px; height: 16px; margin-right: 12px; }
.tiny-caret { width: 0; height: 0; border: 4px solid transparent; border-top: 4px solid #8b96b3; border-bottom: 0; }
.tiny-caret.dark { border-top-color: #222; margin-left: 5px; }

.back-body { flex: 1; display: flex; min-height: 0; }
.side { width: 104px; flex: none; background: #1a2f66; padding-top: 16px; display: flex; flex-direction: column; gap: 23px; color: #8b96b3; font-size: 13.500px; line-height: 18px; text-align: center; }
.side-item { display: block; position: relative; letter-spacing: -.2px; }
.side-ic { height: 36px; display: flex; align-items: center; justify-content: center; margin-bottom: 2px; }
.side-ic svg { margin-top: -3px; }
.side-item.is-active { color: #fff; }
.side-arrow { position: absolute; right: 0; top: 2px; width: 0; height: 0; border: 13px solid transparent; border-right: 13px solid #eee; border-left: 0; }
.s-home { width: 33px; height: 28px; }
.s-cube { width: 30px; height: 34px; }
.s-hosp { width: 32px; height: 34px; }
.s-clock { width: 34px; height: 34px; }
.s-bag { width: 34px; height: 34px; }
.s-srv { width: 32px; height: 36px; }
.s-exp { width: 28px; height: 36px; }
.s-ann { width: 34px; height: 36px; }
.s-cloud { width: 36px; height: 30px; }
.s-grp { width: 36px; height: 32px; }
.s-pen { width: 32px; height: 32px; }

.back-main { flex: 1; background: #eee; padding: 0 17px 0 18px; min-width: 0; }
.back-scroll { width: 21px; flex: none; background: #fff; position: relative; }
.sc-up { position: absolute; left: 4px; top: 14px; width: 0; height: 0; border: 7px solid transparent; border-bottom: 11px solid #8a8a8a; border-top: 0; }

.title-row { height: 80px; border-bottom: 1px solid #dcdcdc; display: flex; align-items: flex-start; padding-top: 17px; margin-bottom: 8px; position: relative; }
.page-title { font-size: 36px; line-height: 42px; font-weight: 700; color: #222; white-space: nowrap; margin-right: 10px; letter-spacing: -.2px; }
.title-case { font-size: 28.500px; line-height: 44px; color: #6c757d; margin-right: 9px; white-space: nowrap; }
.badge-genome { margin-top: 13px; width: 87px; height: 28px; background: #007bff; color: #fff; font-size: 17.600px; font-weight: 700; border-radius: 5px; line-height: 28px; text-align: center; letter-spacing: -.3px; }
.ic-clip { width: 18px; height: 22px; margin: 15px 0 0 4px; fill: #6c757d; }
.hide-form { margin: 0 0 0 29px; width: 114px; height: 40px; background: #6c757d; color: #fff; border-radius: 4px; font-size: 15.400px; display: flex; align-items: center; padding: 0 0 0 12px; }
.ic-hand { width: 14px; height: 20px; margin-right: 2px; }
.btn-group { margin-left: auto; height: 45px; display: flex; border-radius: 5px; overflow: hidden; }
.gb { display: flex; align-items: center; justify-content: center; color: #fff; font-size: 18.300px; }
.gb-grey { width: 165px; background: #6c757d; }
.gb-blue { width: 138px; background: #007bff; font-size: 18px; }
.gb-purple { width: 75px; background: #7079e8; height: 43px; }
.gb-gear { width: 69px; background: #6c757d; color: #212529; }
.ic-back { width: 18px; height: 20px; margin-right: 8px; }
.ic-filter { width: 18px; height: 18px; margin-right: 8px; }
.ic-expand { width: 22px; height: 22px; }
.ic-gear { width: 22px; height: 24px; }

.q-card { background: #f7f7f7; border: 1px solid #e3e3e3; border-top-width: 3px; border-radius: 5px 5px 3px 3px; height: 509px; }
.presets { display: grid; grid-template-columns: 219px 421px 422px 422px 423px 422px 202px; column-gap: 19.500px; padding: 22px 0 0 14px; height: 103px; border-bottom: 1px solid #ddd; }
.preset { display: flex; flex-direction: column; }
.lbl { font-size: 13.800px; font-weight: 700; color: #212529; line-height: 18px; white-space: nowrap; }
.arr { font-weight: 400; font-family: "DejaVu Sans", sans-serif; font-size: 16px; line-height: 14px; margin-left: 1px; color: #495057; }
.sel { display: flex; justify-content: space-between; align-items: center; height: 35px; margin-top: 12px; background: #fff; border: 1px solid #ced4da; border-bottom-width: 2px; border-radius: 4px; font-size: 16px; color: #5b636a; padding: 0 14px 0 10px; }
.tabs { height: 56px; border-bottom: 3px solid #e3e3e3; display: flex; padding: 7px 0 0 3px; position: relative; font-size: 18px; letter-spacing: .2px; }
.tab { color: #007bff; line-height: 54px; height: 52px; white-space: nowrap; padding: 0; margin-right: 39.500px; }
.tab.is-on { color: #495057; background: #fff; border: 1px solid #ddd; border-bottom: 0; border-radius: 5px 5px 0 0; padding: 0 18px; margin-right: 22px; }
.ped { background: #fff; }
.ped-head, .ped-row { display: grid; grid-template-columns: 40px 416px 460px 300px 461px 492px 96px 181px 202px; padding-left: 14px; align-items: center; font-size: 18px; }
.ped-head { height: 70px; border-bottom: 1px solid #dee2e6; color: #212529; padding-top: 14px; }
.ped-head b { font-weight: 700; }
.muted-h { color: #495057; }
.ped-row { height: 67px; padding-bottom: 1px; border-bottom: 1px solid #dee2e6; color: #5b636a; }
.ped-row .dark { color: #343a40; }
.ped-row.grey { background: #f2f2f2; }
.geno-h { display: flex; align-items: center; gap: 8px; margin-top: -16px; }
.x-btn { width: 41px; height: 38px; border: 1px solid #5b636a; border-radius: 3px; background: #fff; display: flex; align-items: center; justify-content: center; color: #212529; }
.x-btn svg { width: 22px; height: 22px; }
.ic-fem { width: 14px; height: 24px; margin-left: 8px; }
.ic-chk { width: 22px; height: 22px; margin-left: 27px; }
.geno-sel { margin: 0 0 0 -69px; width: 271px; }
.geno-sel .sel-caret { margin-left: auto; }
.ref-foot { height: 74.500px; background: #f7f7f7; border-top: 3px solid #e3e3e3; padding: 12px 0 0 23px; }
.refgroup { width: 196px; height: 47px; display: flex; border-radius: 5px; border: 2px solid #6c757d; overflow: hidden; font-size: 17.600px; line-height: 43px; }
.ref-on { width: 89px; background: #6c757d; color: #fff; text-align: center; }
.ref-off { flex: 1; color: #6c757d; text-align: center; background: #fbfbfb; }

.res-card { margin-top: 31px; height: 685px; background: #fff; border: 1px solid #e3e3e3; border-top-width: 3px; border-radius: 5px 5px 3px 3px; box-shadow: 0 2px 2px rgba(0,0,0,.05); overflow: hidden; }
.res-tools { height: 77px; background: #f7f7f7; border-bottom: 3px solid #e3e3e3; display: flex; padding: 12px 0 0 13px; }
.rt-col { display: flex; flex-direction: column; }
.rt-col .lbl { font-size: 14.500px; line-height: 18px; }
.rt-first { width: 73px; }
.num { width: 40px; height: 38px; margin: 3px 0 0 16px; border: 1px solid #6c757d; border-radius: 4px; background: #fff; font-size: 15.400px; line-height: 36px; text-align: center; color: #6c757d; }
.rt-wide { margin-left: 12px; width: 179px; margin-right: 4px; }
.rt-wide .small { margin-top: 3px; height: 38px; }
.res-head { height: 45px; display: grid; grid-template-columns: 42px 184px 200px; padding: 1px 0 0 12px; align-items: center; font-size: 13.200px; color: #343a40; }
.res-head b { font-weight: 700; }
.arrow-up { display: inline-block; width: 0; height: 0; border: 5px solid transparent; border-bottom: 6px solid #343a40; border-top: 0; vertical-align: 2px; margin-left: 2px; }
.res-row { height: 43.100px; display: grid; grid-template-columns: 42px 184px 200px; padding-left: 12px; align-items: center; font-size: 13.200px; color: #495057; }
.res-row.gr { background: #c9c9c9; }
.res-row.gn { background: #c3e6cb; }
.vi { display: grid; grid-template-columns: repeat(7, 22px); align-items: center; justify-items: center; margin-left: -4px; color: #6c757d; }
.vs { width: 23px; height: 23px; }
.vb { width: 24px; height: 24px; }
.vc { width: 20px; height: 20px; color: #8e959b; }
.vm { width: 15px; height: 20px; border: 1px solid #ccc; background: #fbfbfb; border-radius: 3px; font-style: normal; font-size: 10px; line-height: 18px; text-align: center; }
.vm.wh { background: #fff; border-color: #eee; }
.vd { width: 24px; height: 24px; }
.vf { width: 20px; height: 20px; color: #d9dcdf; }
.gr .vf, .gn .vf { color: #b8bcbf; opacity: .6; }

/* front window */
.win-front { position: absolute; left: 528px; top: 510px; width: 2734px; height: 1363px; border-radius: 30px 26px 0 30px; overflow: hidden; box-shadow: -12px -8px 28px rgba(0,0,0,.28), 4px 6px 14px rgba(0,0,0,.03); background: #eee; display: flex; font-family: Roboto, "Liberation Sans", sans-serif; color: rgba(0,0,0,.85); border-bottom: 3px solid #cfcfcf; }
.fnav { width: 434px; height: 1047px; margin: 14px 13px 0 9px; flex: none; background: #fff; border-radius: 10px; padding: 10px 11px 0; display: flex; flex-direction: column; gap: 14px; }
.btn-out { width: 412px; height: 43px; flex: none; background: #fff; border: 2px solid #7079e8; border-radius: 4px; color: #7079e8; font-family: Roboto, sans-serif; font-size: 16px; letter-spacing: 1.400px; text-transform: uppercase; display: flex; align-items: center; justify-content: center; font-weight: 500; }
.bi { width: 19px; height: 19px; margin-right: 12px; }
.fn-list { margin-top: 3px; margin-left: -11px; }
.fn-item { height: 48px; padding-left: 87px; font-size: 19px; line-height: 48px; display: flex; position: relative; color: #333; letter-spacing: .1px; }
.fn-head { padding-left: 21px; }
.fn-ic { width: 26px; height: 26px; margin: 11px 40px 0 0; flex: none; }
.fn-ic-t { width: 30px; height: 30px; margin: 9px 36px 0 -2px; }
.fn-chev { width: 24px; height: 24px; position: absolute; right: 12px; top: 11px; }

.fmain { width: 2234px; flex: none; margin-right: 18px; }
.vd-head { height: 60px; display: flex; justify-content: space-between; padding-left: 6px; align-items: flex-start; padding-top: 9px; }
.vd-title { display: flex; align-items: baseline; gap: 14px; white-space: nowrap; }
.vd-title h2 { font-size: 40.600px; font-weight: 400; color: #333; line-height: 42px; letter-spacing: .25px; }
.vd-title em { font-size: 34.200px; color: #333; }
.vd-btn { width: 74px; height: 40px; background: #7079e8; border-radius: 4px; color: #fff; display: flex; align-items: center; justify-content: center; }
.vd-btn svg { width: 20px; height: 20px; }
.vd-gene { height: 74px; font-size: 29.200px; line-height: 66px; padding-left: 6px; color: #333; letter-spacing: .1px; }
.fcard { background: #fff; border-radius: 10px; padding: 15px 20px 0; position: relative; margin-bottom: 19px; }
.hq { position: absolute; right: 8px; top: 9px; width: 26px; height: 26px; color: #7079e8; }
.fc-title { font-size: 24.600px; line-height: 30px; color: #333; }
.fc-sub { font-size: 14.500px; letter-spacing: 2.200px; text-transform: uppercase; color: #8a8a8a; line-height: 18px; margin-top: 6px; }
.fc1 { height: 249px; display: flex; flex-direction: column; }
.gene-line { margin-top: 20px; font-size: 17.350px; line-height: 20px; color: #333; }
.gene-line u { text-decoration: underline dotted; text-underline-offset: 3px; }
.gene-desc { margin-top: 11px; font-size: 17.350px; line-height: 24px; color: #333; white-space: nowrap; }
.gene-desc a { color: #007bff; }
.ext-row { margin-top: auto; height: 60px; display: flex; align-items: center; margin-left: -2px; padding-bottom: 2px; }
.xl { display: flex; align-items: center; color: #7079e8; font-size: 16px; letter-spacing: 1.600px; text-transform: uppercase; font-weight: 500; margin-right: 28px; }
.xl svg { width: 20px; height: 20px; margin-right: 10px; }
.more-info { margin-left: auto; font-size: 15.500px; color: #8a8a8a; white-space: nowrap; }
.more { display: flex; align-items: center; margin-left: 24px; color: #7079e8; font-size: 16px; font-weight: 500; letter-spacing: 1.600px; text-transform: uppercase; }
.more svg { width: 18px; height: 18px; margin-left: 14px; margin-right: 0; }

.fc2 { height: 428px; }
.panels { display: grid; grid-template-columns: 539px 540px 540px; column-gap: 12px; margin-top: 17px; }
.panels .pan:nth-child(2) { margin-left: 1px; }
.pan { background: #eee; border-radius: 8px; height: 324px; padding: 19px 15px 0; }
.pan-plain { display: block; font-size: 17.400px; line-height: 20px; color: #333; margin: -3px 0 0 -1px; }
.pan-title { font-size: 19px; line-height: 22px; display: flex; align-items: center; gap: 5px; color: #333; height: 22px; margin-bottom: 7px; }
.pan-title small { font-size: 14.500px; margin-top: 2px; }
.pan-ext { width: 20px; height: 21px; color: #007bff; margin-left: 2px; }
.pr { height: 43px; display: flex; justify-content: space-between; align-items: center; font-size: 17.400px; color: #333; padding-top: 1px; }
.pr.center { justify-content: center; }
.pr.line { border-bottom: 1px solid #cfcfcf; }
.pr.thick { border-bottom-width: 2px; }
.pr u { text-decoration: underline dotted; text-underline-offset: 3px; }
.fc3 { height: 514px; overflow: hidden; margin: 0; border-radius: 10px 10px 0 0; }
.bar-box { background: #eee; border: 1px solid #d5d5d5; border-top-width: 2px; border-bottom-width: 2px; display: flex; align-items: center; padding: 0 20px 0 10px; border-radius: 8px 8px 0 0; font-size: 19.600px; position: relative; height: 79px; }
.bb1 { margin-top: 23px; }
.bb2 { margin-top: 19px; }
.bar-label { display: flex; align-items: center; gap: 6px; padding-top: 14px; color: #333; flex: 1; }
.bar-label small { font-size: 16px; color: #555; }
.bar-label a { color: #4a7bd8; }
.bar-ext { width: 24px; height: 26px; color: #007bff; display: inline-block; }
.sort-by { margin: -5px 0 0; padding: 0 28px 4px 17px; width: 264px; height: 54px; border: 1px solid #999; border-radius: 4px; display: flex; align-items: center; justify-content: space-between; font-size: 18.400px; color: #333; }
.sort-by legend { font-size: 13.500px; padding: 0 3px; margin-left: -4px; color: #777; line-height: 8px; }
.tri { width: 0; height: 0; border: 5px solid transparent; border-top: 7px solid #666; border-bottom: 0; }
.sort-dir { display: flex; align-items: center; gap: 6px; font-size: 15.500px; letter-spacing: 1px; margin: -6px 0 0 22px; width: 75px; color: #333; font-weight: 500; }
.sort-dir svg { width: 20px; height: 20px; }
.bb2 .sort-dir { margin-left: 21px; width: 86px; }
.dis-box { background: #eee; border-radius: 10px; margin-top: 20px; height: 180px; padding: 14px 15px 0 14px; }
.dis-title { font-size: 24.700px; line-height: 28px; color: #222; }
.dis-line { font-size: 17.500px; line-height: 20px; color: #333; margin-top: 12px; white-space: nowrap; }
.conf { margin-top: 16px; }
.conf b { font-weight: 700; }
.stars { font-size: 27px; letter-spacing: 1px; color: #111; line-height: 18px; vertical-align: -2px; }
.dis-more { margin: 22px 0 0 49px; display: flex; justify-content: space-between; font-size: 18.200px; color: #333; padding-right: 52px; }
.plus { font-size: 26px; line-height: 20px; color: #222; }
.dis-last { height: 60px; }
.dis-sub { font-size: 22px; line-height: 30px; display: flex; align-items: center; gap: 8px; white-space: nowrap; }
.dis-sub small { font-size: 13px; color: #555; }

.f-scroll { width: 26px; flex: none; background: #fff; position: relative; }
.f-scroll .sc-up { left: 2px; top: 3px; }
.thumb { position: absolute; left: 4px; top: 23px; width: 14px; height: 193px; background: #888; border-radius: 7px; }
.sc-down { position: absolute; left: 5px; top: 1338px; width: 0; height: 0; border: 6px solid transparent; border-top: 11px solid #8a8a8a; border-bottom: 0; }
```
